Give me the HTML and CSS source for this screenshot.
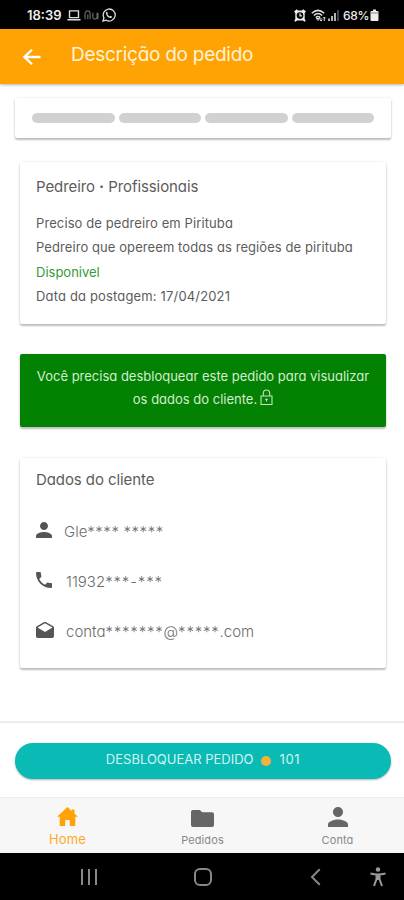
FILE: index.html
```html
<!DOCTYPE html>
<html lang="pt-BR">

<head>
  <meta charset="utf-8">
  <meta name="viewport" content="width=device-width, initial-scale=1">
  <title>Descrição do pedido</title>
  <link rel="stylesheet" href="styles.css">
</head>

<body>

  <div class="status-bar">
    <span class="hora">18:39</span>
    <svg class="st-laptop" width="14" height="13" viewBox="0 0 15 13"><path d="M2.700 1.500h9.600v7.300H2.700zM.5 11h14" fill="none" stroke="#ddd" stroke-width="1.500"/></svg>
    <svg class="st-app" width="15" height="12" viewBox="0 0 16 13"><path d="M1 11V6q0-4 3-4 2.500 0 2.500 2.500V11M4 6v5M9.500 4v5q0 2 2 2t2.500-2V4M15 4v7" fill="none" stroke="#666" stroke-width="1.300"/></svg>
    <svg class="st-whats" width="14" height="14" viewBox="0 0 14 14"><path d="M1 13l.9-3.200A6 6 0 1 1 4.200 12.200z" fill="none" stroke="#ddd" stroke-width="1.300"/><path d="M4.800 3.600l1.200 1.700-.6.900q.8 1.500 2.300 2.200l.9-.7 1.500 1q-.3 1.500-1.700 1.400Q4.400 9.300 4 5.300q0-1.100.8-1.700z" fill="#ddd"/></svg>
    <span class="espaco"></span>
    <svg class="st-alarme" width="12" height="13" viewBox="0 0 12 13"><path d="M0 2.500L2.800.3 4 1.500h4L9.200.3 12 2.500 10.700 4v6l1 2-1.400.7L9 11.500H3l-1.300 1.200-1.400-.7 1-2V4z" fill="#eee"/><circle cx="6" cy="6.600" r="3.300" fill="#000"/><path d="M6 4.300v2.500h2" fill="none" stroke="#eee" stroke-width="1.200"/></svg>
    <svg class="st-wifi" width="16" height="13" viewBox="0 0 16 13"><path d="M.8 4.200Q7 -1.500 13.200 4.200M2.800 6.500Q7 2.500 11.200 6.500M4.800 8.600Q7 6.500 9.200 8.600" fill="none" stroke="#ddd" stroke-width="1.500"/><path d="M5.300 9.500L7 11.500l1.700-2zM10 9v3M8.700 10.700L10 12l1.300-1.300M13.300 12V8M12 9.300L13.300 8l1.300 1.300" fill="none" stroke="#ddd"/></svg>
    <svg class="st-sinal" width="11" height="12" viewBox="0 0 11 12"><path d="M1 12V9.500M4 12V7M7 12V4" stroke="#ddd" stroke-width="1.600"/><path d="M10 12V1" stroke="#555" stroke-width="1.600"/></svg>
    <span class="bateria-texto">68%</span>
    <svg class="st-bateria" width="9" height="12" viewBox="0 0 9 12"><path d="M3 .5h3V2h1.500q1 0 1 1v8q0 1-1 1h-6q-1 0-1-1V3q0-1 1-1H3z" fill="#eee"/><path d="M1 4h7" stroke="#888"/></svg>
  </div>

  <header class="topo">
    <svg width="18" height="18" viewBox="1 0 18 18"><path d="M18.500 9H3M10 1.700L2.500 9l7.500 7.300" fill="none" stroke="#fff" stroke-width="2.300"/></svg>
    <h1>Descrição do pedido</h1>
  </header>

  <main class="conteudo">
    <div class="card etapas">
      <div class="etapa"></div>
      <div class="etapa"></div>
      <div class="etapa"></div>
      <div class="etapa"></div>
    </div>

    <section class="card pedido">
      <h2 class="titulo-pedido">Pedreiro <b>·</b> Profissionais</h2>
      <p class="resumo">Preciso de pedreiro em Pirituba</p>
      <p class="detalhe">Pedreiro que opereem todas as regiões de pirituba</p>
      <p class="disponivel">Disponivel</p>
      <p class="data">Data da postagem: 17/04/2021</p>
    </section>

    <section class="card aviso">
      <p class="aviso-1">Você precisa desbloquear este pedido para visualizar</p>
      <p class="aviso-2"><span>os dados do cliente.</span>
        <svg width="13" height="17" viewBox="0 0 13 17"><path d="M1 7h11v8.500H1zM3.300 7V4.300q0-3.300 3.200-3.300t3.200 3.300V7M6.500 9.500v3M5.300 10.500h2.400" fill="none" stroke="#c5e3c0" stroke-width="1.100"/></svg>
      </p>
    </section>

    <section class="card cliente">
      <h2 class="titulo-cliente">Dados do cliente</h2>
      <div class="linha">
        <svg width="16" height="16" viewBox="4 4 16 16"><path d="M12 12c2.210 0 4-1.790 4-4s-1.790-4-4-4-4 1.790-4 4 1.790 4 4 4zm0 2c-2.670 0-8 1.340-8 4v2h16v-2c0-2.660-5.330-4-8-4z" fill="#555"/></svg>
        <span class="nome">Gle<i>****</i> <i>*****</i></span>
      </div>
      <div class="linha">
        <svg width="16" height="16" viewBox="3 3 18 18"><path d="M6.620 10.790c1.440 2.830 3.760 5.140 6.590 6.590l2.200-2.200c.27-.27.67-.36 1.020-.24 1.120.37 2.330.57 3.570.57.550 0 1 .45 1 1V20c0 .55-.45 1-1 1-9.390 0-17-7.610-17-17 0-.55.45-1 1-1h3.500c.55 0 1 .45 1 1 0 1.250.2 2.450.57 3.570.11.35.03.74-.25 1.020l-2.200 2.200z" fill="#555"/></svg>
        <span class="fone">11932<i>***-***</i></span>
      </div>
      <div class="linha">
        <svg width="18" height="16" viewBox="2 1.500 20 18.500" preserveAspectRatio="none"><path d="M21.990 8c0-.72-.37-1.350-.94-1.700L12 1 2.950 6.300C2.380 6.650 2 7.280 2 8v10c0 1.100.9 2 2 2h16c1.100 0 2-.9 2-2l-.01-10zM12 13L3.740 7.840 12 3l8.260 4.840L12 13z" fill="#555"/></svg>
        <span class="email">conta<i>*******</i>@<i>*****</i>.com</span>
      </div>
    </section>
  </main>

  <footer class="acao">
    <button class="desbloquear">
      <span class="acao-texto">DESBLOQUEAR PEDIDO</span>
      <span class="moeda"></span>
      <span class="valor">101</span>
    </button>
  </footer>

  <nav class="abas">
    <a class="aba ativa">
      <svg width="21" height="19" viewBox="0 0 21 20" preserveAspectRatio="none"><path d="M10.500 0L0 10.300h2.700V20h5.500v-6.300h4.600V20h5.500v-9.700H21L17.500 7V2.500h-2.700v1.800z" fill="#ffa204"/></svg>
      <span>Home</span>
    </a>
    <a class="aba">
      <svg width="23" height="17" viewBox="0 0 23 18" preserveAspectRatio="none"><path d="M2 0h6.800l2.500 2.300H21q2 0 2 2V16q0 2-2 2H2q-2 0-2-2V2q0-2 2-2z" fill="#666"/></svg>
      <span>Pedidos</span>
    </a>
    <a class="aba">
      <svg width="20" height="20" viewBox="4 4 16 16"><path d="M12 12c2.210 0 4-1.790 4-4s-1.790-4-4-4-4 1.790-4 4 1.790 4 4 4zm0 2c-2.670 0-8 1.340-8 4v2h16v-2c0-2.660-5.330-4-8-4z" fill="#666"/></svg>
      <span>Conta</span>
    </a>
  </nav>

  <div class="sistema">
    <svg class="recentes" width="18" height="18" viewBox="0 0 18 18"><path d="M2 1v16M9 1v16M16 1v16" stroke="#888" stroke-width="2"/></svg>
    <svg class="inicio" width="18" height="18" viewBox="0 0 18 18"><rect x="1" y="1" width="16" height="16" rx="5" fill="none" stroke="#888" stroke-width="2"/></svg>
    <svg class="voltar" width="11" height="18" viewBox="0 0 11 18"><path d="M9.700 1.200L2 9l7.700 7.800" fill="none" stroke="#888" stroke-width="2"/></svg>
    <svg class="acesso" width="16" height="20" viewBox="0 0 16 20"><circle cx="8" cy="2.500" r="2.200" fill="#999"/><path d="M.5 6.500Q8 8.500 15.500 6.500M6.500 7v5L4 19M9.500 7v5l2.500 7M8 7v6" fill="none" stroke="#999" stroke-width="2"/></svg>
  </div>

</body>

</html>
```

FILE: styles.css
```css
* {
  box-sizing: border-box;
}

body {
  margin: 0;
  width: 404px;
  height: 900px;
  display: flex;
  flex-direction: column;
  overflow: hidden;
  background: #fff;
  color: #5c5c5c;
  font-family: Inter, Lato, sans-serif;
  font-feature-settings: "cv11";
  font-size: 13px;
}

h1, h2, p {
  margin: 0;
  font-weight: 400;
  white-space: nowrap;
}

svg {
  display: block;
  flex: none;
}

.espaco {
  flex: 1;
}

.status-bar {
  flex: none;
  height: 29px;
  padding: 1px 25px 0 27px;
  display: flex;
  align-items: center;
  background: #000;
  color: #eee;
}

.hora {
  width: 40px;
  font-size: 13px;
  font-weight: 600;
}

.st-app {
  margin: 0 3px;
}

.st-wifi {
  margin: 0 1px 0 5px;
}

.st-sinal {
  margin-right: 4px;
}

.bateria-texto {
  width: 27px;
  font-size: 12px;
  font-weight: 500;
  letter-spacing: -0.3px;
}

.topo {
  flex: none;
  height: 55px;
  padding: 0 23px;
  display: flex;
  align-items: center;
  gap: 30px;
  background: #ffa204;
  color: #fff3d6;
  box-shadow: 0 1px 3px rgba(0, 0, 0, .3);
}

.topo h1 {
  font-size: 19px;
  line-height: 24px;
  letter-spacing: -0.27px;
  margin-top: -4px;
}

.conteudo {
  flex: 1;
  padding: 14px 18px 0 20px;
}

.card {
  background: #fff;
  border-radius: 2px;
  box-shadow: 0 2px 2px rgba(0, 0, 0, .24), 0 0 3px rgba(0, 0, 0, .1);
}

.etapas {
  height: 40px;
  margin: 0 -5px 24px;
  padding: 0 17px;
  display: flex;
  align-items: center;
  gap: 4px;
}

.etapa {
  flex: 1;
  height: 10px;
  border-radius: 5px;
  background: #d1d1d1;
}

.pedido {
  height: 162px;
  margin-bottom: 30px;
  padding: 13px 16px;
}

.pedido p {
  line-height: 24.300px;
}

.pedido h2 {
  margin-bottom: 12px;
}

h2 {
  font-size: 15px;
  line-height: 24px;
  letter-spacing: -0.08px;
}

.resumo {
  letter-spacing: 0.1px;
}

.detalhe {
  letter-spacing: 0.08px;
}

.data {
  letter-spacing: 0.16px;
}

.pedido .disponivel {
  color: #369a36;
}

.aviso {
  height: 73px;
  margin-bottom: 31px;
  padding-top: 11px;
  background: #028102;
  color: #d6edd0;
}

.aviso p {
  display: flex;
  justify-content: center;
  align-items: center;
  line-height: 23px;
}

.aviso svg {
  margin: -4px 0 0 3px;
}

.cliente {
  height: 210px;
  padding: 10px 16px;
}

.linha {
  height: 50px;
  display: flex;
  align-items: center;
  gap: 12px;
  font-size: 15px;
  font-weight: 300;
  color: #6c6c6c;
}

.linha svg {
  margin-top: -3px;
}

.titulo-cliente {
  margin-bottom: 14px;
}

.linha i {
  font-style: normal;
  letter-spacing: 0.5px;
}

.linha .fone {
  margin-left: 2px;
}

.linha .fone i {
  letter-spacing: 0.850px;
}

.linha .email i {
  letter-spacing: 0.780px;
}

.acao {
  flex: none;
  height: 76px;
  padding: 20px 13px 0 15px;
  border-top: 2px solid #ececec;
}

.desbloquear {
  width: 100%;
  height: 36px;
  padding: 0 0 4px;
  display: flex;
  justify-content: center;
  align-items: center;
  border: 0;
  border-radius: 18px;
  background: #0abab5;
  box-shadow: 0 1px 2px rgba(0, 0, 0, .3);
  color: #d2f5f2;
  font-family: inherit;
  font-size: 13px;
  font-feature-settings: inherit;
}

.moeda {
  width: 10px;
  height: 10px;
  margin: 4px 9px 0 7px;
  border-radius: 50%;
  background: #f3b33b;
}

.valor {
  letter-spacing: 0.6px;
}

.abas {
  flex: none;
  height: 56px;
  display: flex;
  background: #f7f7f7;
  border-top: 1px solid #eee;
}

.aba {
  flex: 1;
  display: flex;
  flex-direction: column;
  align-items: center;
  justify-content: flex-end;
  padding-bottom: 5px;
  gap: 5px;
  font-size: 11px;
  line-height: 16px;
  letter-spacing: 0.1px;
  color: #888;
}

.abas .aba:not(.ativa) {
  padding-left: 2px;
}

.abas .ativa {
  padding-left: 1px;
  padding-bottom: 6px;
  font-size: 13px;
  color: #ffa928;
}

.sistema {
  flex: none;
  height: 47px;
  display: flex;
  align-items: center;
  padding: 1px 18px 0 80px;
  background: #000;
}

.inicio {
  margin-left: 96px;
}

.voltar {
  margin-left: 98px;
}

.acesso {
  margin-left: auto;
}
```
